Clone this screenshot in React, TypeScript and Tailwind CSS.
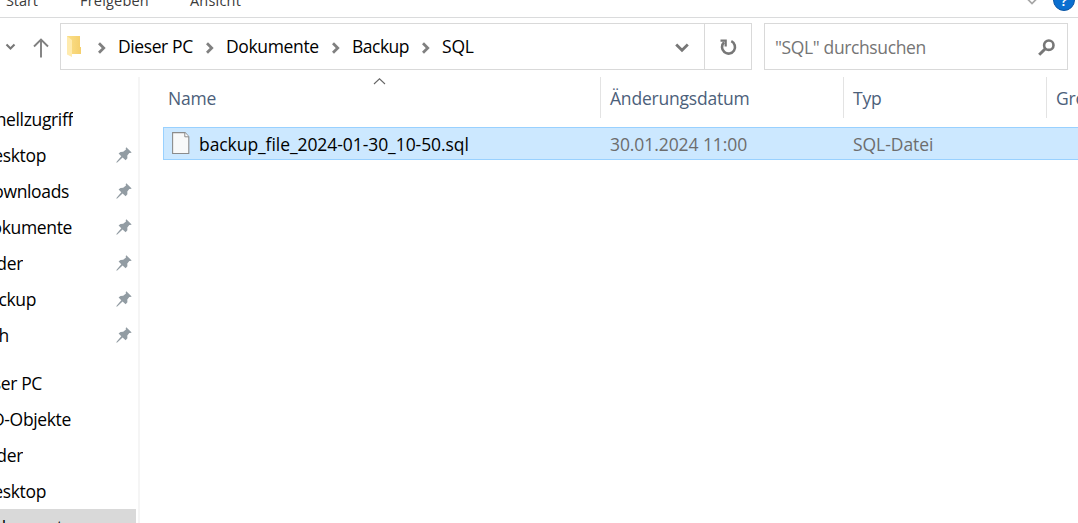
import type { ReactNode } from 'react';

function Chevron({ className = '' }: { className?: string }) {
  return (
    <svg viewBox="0 0 10 12" className={`h-3 w-2.5 shrink-0 ${className}`} fill="none" stroke="#808080" strokeWidth="2.8">
      <path d="M2 1.3 6.7 6 2 10.7" />
    </svg>
  );
}

function Pin() {
  return (
    <svg viewBox="0 0 16 16" className="h-4 w-4 shrink-0" fill="#929ca3">
      <path d="M10.3 .3 15.7 5.5 14.2 6.1 13.3 6 11.3 8.6 11.4 11.2 9.6 13.3 6.6 10.5 1.2 15.5 .4 15.7 .6 14.8 5.3 9.2 2.6 6.6 4.5 4.9 7.2 4.8 10 2.5 9.7 1.3Z" />
    </svg>
  );
}

function FolderIcon() {
  return (
    <svg viewBox="0 0 14 22" className="h-[22px] w-3.5 shrink-0">
      <defs>
        <linearGradient id="folderBack" x1="0" x2="1">
          <stop offset="0" stopColor="#fbe08a" />
          <stop offset="1" stopColor="#f5cf6c" />
        </linearGradient>
      </defs>
      <path d="M0 0H13V11H14V18H4V4L0 1Z" fill="url(#folderBack)" />
      <path d="M0 .3 5 4V21L0 18.5Z" fill="#ffebae" />
    </svg>
  );
}

function FileIcon() {
  return (
    <svg viewBox="0 0 18 23" className="h-[23px] w-[18px] shrink-0" fill="#f8f9f9" stroke="#8b8b8b">
      <path d="M.6 .6H13L16.8 4.6V21.5H.6Z" strokeWidth="1.1" />
      <path d="M12.8 .8V4.8H16.8" fill="#fff" strokeWidth="1" />
    </svg>
  );
}

function SideRow({ label, width, pin, selected }: { label: string; width: string; pin?: boolean; selected?: boolean }) {
  return (
    <div className={`flex h-9 w-[136px] shrink-0 items-center justify-between pr-1 ${selected ? 'bg-[#d9d9d9]' : ''}`}>
      <div className={`flex justify-end overflow-hidden pb-px ${width}`}>
        <span className="tracking-[-0.35px]">{label}</span>
      </div>
      {pin && <Pin />}
    </div>
  );
}

function Header({ className, children }: { className: string; children: ReactNode }) {
  return (
    <div className={`flex h-[41px] shrink-0 items-center border-r border-[#e3e3e3] tracking-[-0.2px] text-[#4c607a] ${className}`}>
      {children}
    </div>
  );
}

export default function App() {
  return (
    <div className="flex h-[523px] w-[1078px] flex-col overflow-hidden bg-white font-['Open_Sans','Noto_Sans',sans-serif] text-[17.5px] leading-6 whitespace-nowrap text-black">
      <div className="flex h-[18px] shrink-0 items-start overflow-hidden border-b border-[#dadbdc] pl-[6px] text-[14.5px] text-[#3b3b3b]">
        <div className="-mt-[11px] w-[74px] tracking-[-0.1px]">Start</div>
        <div className="-mt-[11px] w-[110px] tracking-[0.2px]">Freigeben</div>
        <div className="-mt-[11px] tracking-[0.2px]">Ansicht</div>
        <div className="-mt-3 ml-auto flex items-start gap-[15px] pr-[3px]">
          <svg viewBox="0 0 12 8" className="mt-[9px] h-2 w-3" fill="none" stroke="#a6a6a6" strokeWidth="1.7">
            <path d="M1 1.5 6 6.5 11 1.5" />
          </svg>
          <div className="flex h-[23px] w-[22px] items-end justify-center rounded-full border border-[#0a55a5] bg-[#0a6fd0] text-[15px] leading-5 font-semibold text-white">?</div>
        </div>
      </div>

      <div className="flex h-[59px] shrink-0 items-start pt-[5px]">
        <div className="flex h-[47px] w-[60px] shrink-0 items-center pl-[5px]">
          <svg viewBox="0 0 12 8" className="h-2 w-3" fill="none" stroke="#777" strokeWidth="2.1">
            <path d="M1.5 1.5 5.5 5.5 9.5 1.5" />
          </svg>
          <svg viewBox="0 0 16 20" className="mt-[3px] ml-4 h-5 w-4" fill="none" stroke="#808080" strokeWidth="1.9">
            <path d="M8 19.5V2M1 8.5 8 1.5 15 8.5" />
          </svg>
        </div>
        <div className="flex h-[47px] w-[692px] shrink-0 border border-[#d9d9d9]">
          <div className="flex w-[643px] items-center pl-1.5">
            <FolderIcon />
            <Chevron className="mt-0.5 ml-4" />
            <span className="ml-[11px] w-[87px] pb-0.5 tracking-[-0.4px]">Dieser PC</span>
            <Chevron className="mt-0.5" />
            <span className="ml-[11px] w-[105px] pb-0.5 tracking-[-0.35px]">Dokumente</span>
            <Chevron className="mt-0.5" />
            <span className="ml-[11px] w-[69px] pb-0.5 tracking-[-0.5px]">Backup</span>
            <Chevron className="mt-0.5" />
            <span className="ml-[11px] pb-0.5 tracking-[-0.2px]">SQL</span>
            <svg viewBox="0 0 14 10" className="mt-0.5 mr-[15px] ml-auto h-2.5 w-3.5" fill="none" stroke="#777" strokeWidth="2.8">
              <path d="M1.2 1.5 7 7.3 12.8 1.5" />
            </svg>
          </div>
          <div className="flex flex-1 items-center justify-center border-l border-[#d9d9d9]">
            <svg viewBox="0 0 17 17" className="mt-0.5 ml-px h-[17px] w-[17px]" fill="none" stroke="#777" strokeWidth="2.6">
              <path d="M11.3 2.2A6.5 6.5 0 1 1 4.1 3.3" />
              <path d="M.5 1.6H5.7V7.5" strokeWidth="2.2" />
            </svg>
          </div>
        </div>
        <div className="ml-3 flex h-[47px] w-[304px] shrink-0 items-center justify-between border border-[#d9d9d9] pr-3 pl-[10px]">
          <span className="tracking-[-0.38px] text-[#757575]">"SQL" durchsuchen</span>
          <svg viewBox="0 0 17 17" className="mt-0.5 h-[17px] w-[17px]" fill="none" stroke="#777">
            <circle cx="10.8" cy="6.2" r="4.7" strokeWidth="2.6" />
            <path d="M7.3 9.7 1.2 15.8" strokeWidth="3" />
          </svg>
        </div>
      </div>

      <div className="flex min-h-0 flex-1">
        <div className="flex w-[140px] shrink-0 flex-col overflow-hidden border-r-2 border-[#f5f5f5] pt-6">
          <SideRow label="Schnellzugriff" width="w-[73px]" />
          <SideRow label="Desktop" width="w-[46px]" pin />
          <SideRow label="Downloads" width="w-[69px]" pin />
          <SideRow label="Dokumente" width="w-[72px]" pin />
          <SideRow label="Bilder" width="w-[23px]" pin />
          <SideRow label="Backup" width="w-[36px]" pin />
          <SideRow label="h" width="w-[9px]" pin />
          <div className="h-3 shrink-0" />
          <SideRow label="Dieser PC" width="w-[42px]" />
          <SideRow label="3D-Objekte" width="w-[71px]" />
          <SideRow label="Bilder" width="w-[23px]" />
          <SideRow label="Desktop" width="w-[46px]" />
          <SideRow label="Dokumente" width="w-[72px]" selected />
        </div>
        <div className="flex min-w-0 flex-1 flex-col overflow-hidden pl-[23px]">
          <div className="flex">
            <Header className="w-[438px] pl-[5px]">
              <span className="w-[205px]">Name</span>
              <svg viewBox="0 0 13 7" className="mb-8 h-[7px] w-[13px]" fill="none" stroke="#666" strokeWidth="1.1">
                <path d="M1 6 6.5 .8 12 6" />
              </svg>
            </Header>
            <Header className="w-[243px] pl-[9px]">Änderungsdatum</Header>
            <Header className="w-[203px] pl-[9px]">Typ</Header>
            <Header className="w-[100px] pl-[9px]">Größe</Header>
          </div>
          <div className="mt-[9px] flex h-[33px] w-[930px] shrink-0 items-center border border-[#99d1ff] bg-[#cce8ff] pl-2">
            <FileIcon />
            <span className="ml-[9px] w-[411px] pt-px tracking-[-0.07px]">backup_file_2024-01-30_10-50.sql</span>
            <span className="w-[243px] pt-px tracking-[-0.08px] text-[#6d6d6d]">30.01.2024 11:00</span>
            <span className="pt-px tracking-[-0.05px] text-[#6d6d6d]">SQL-Datei</span>
          </div>
        </div>
      </div>
    </div>
  );
}
